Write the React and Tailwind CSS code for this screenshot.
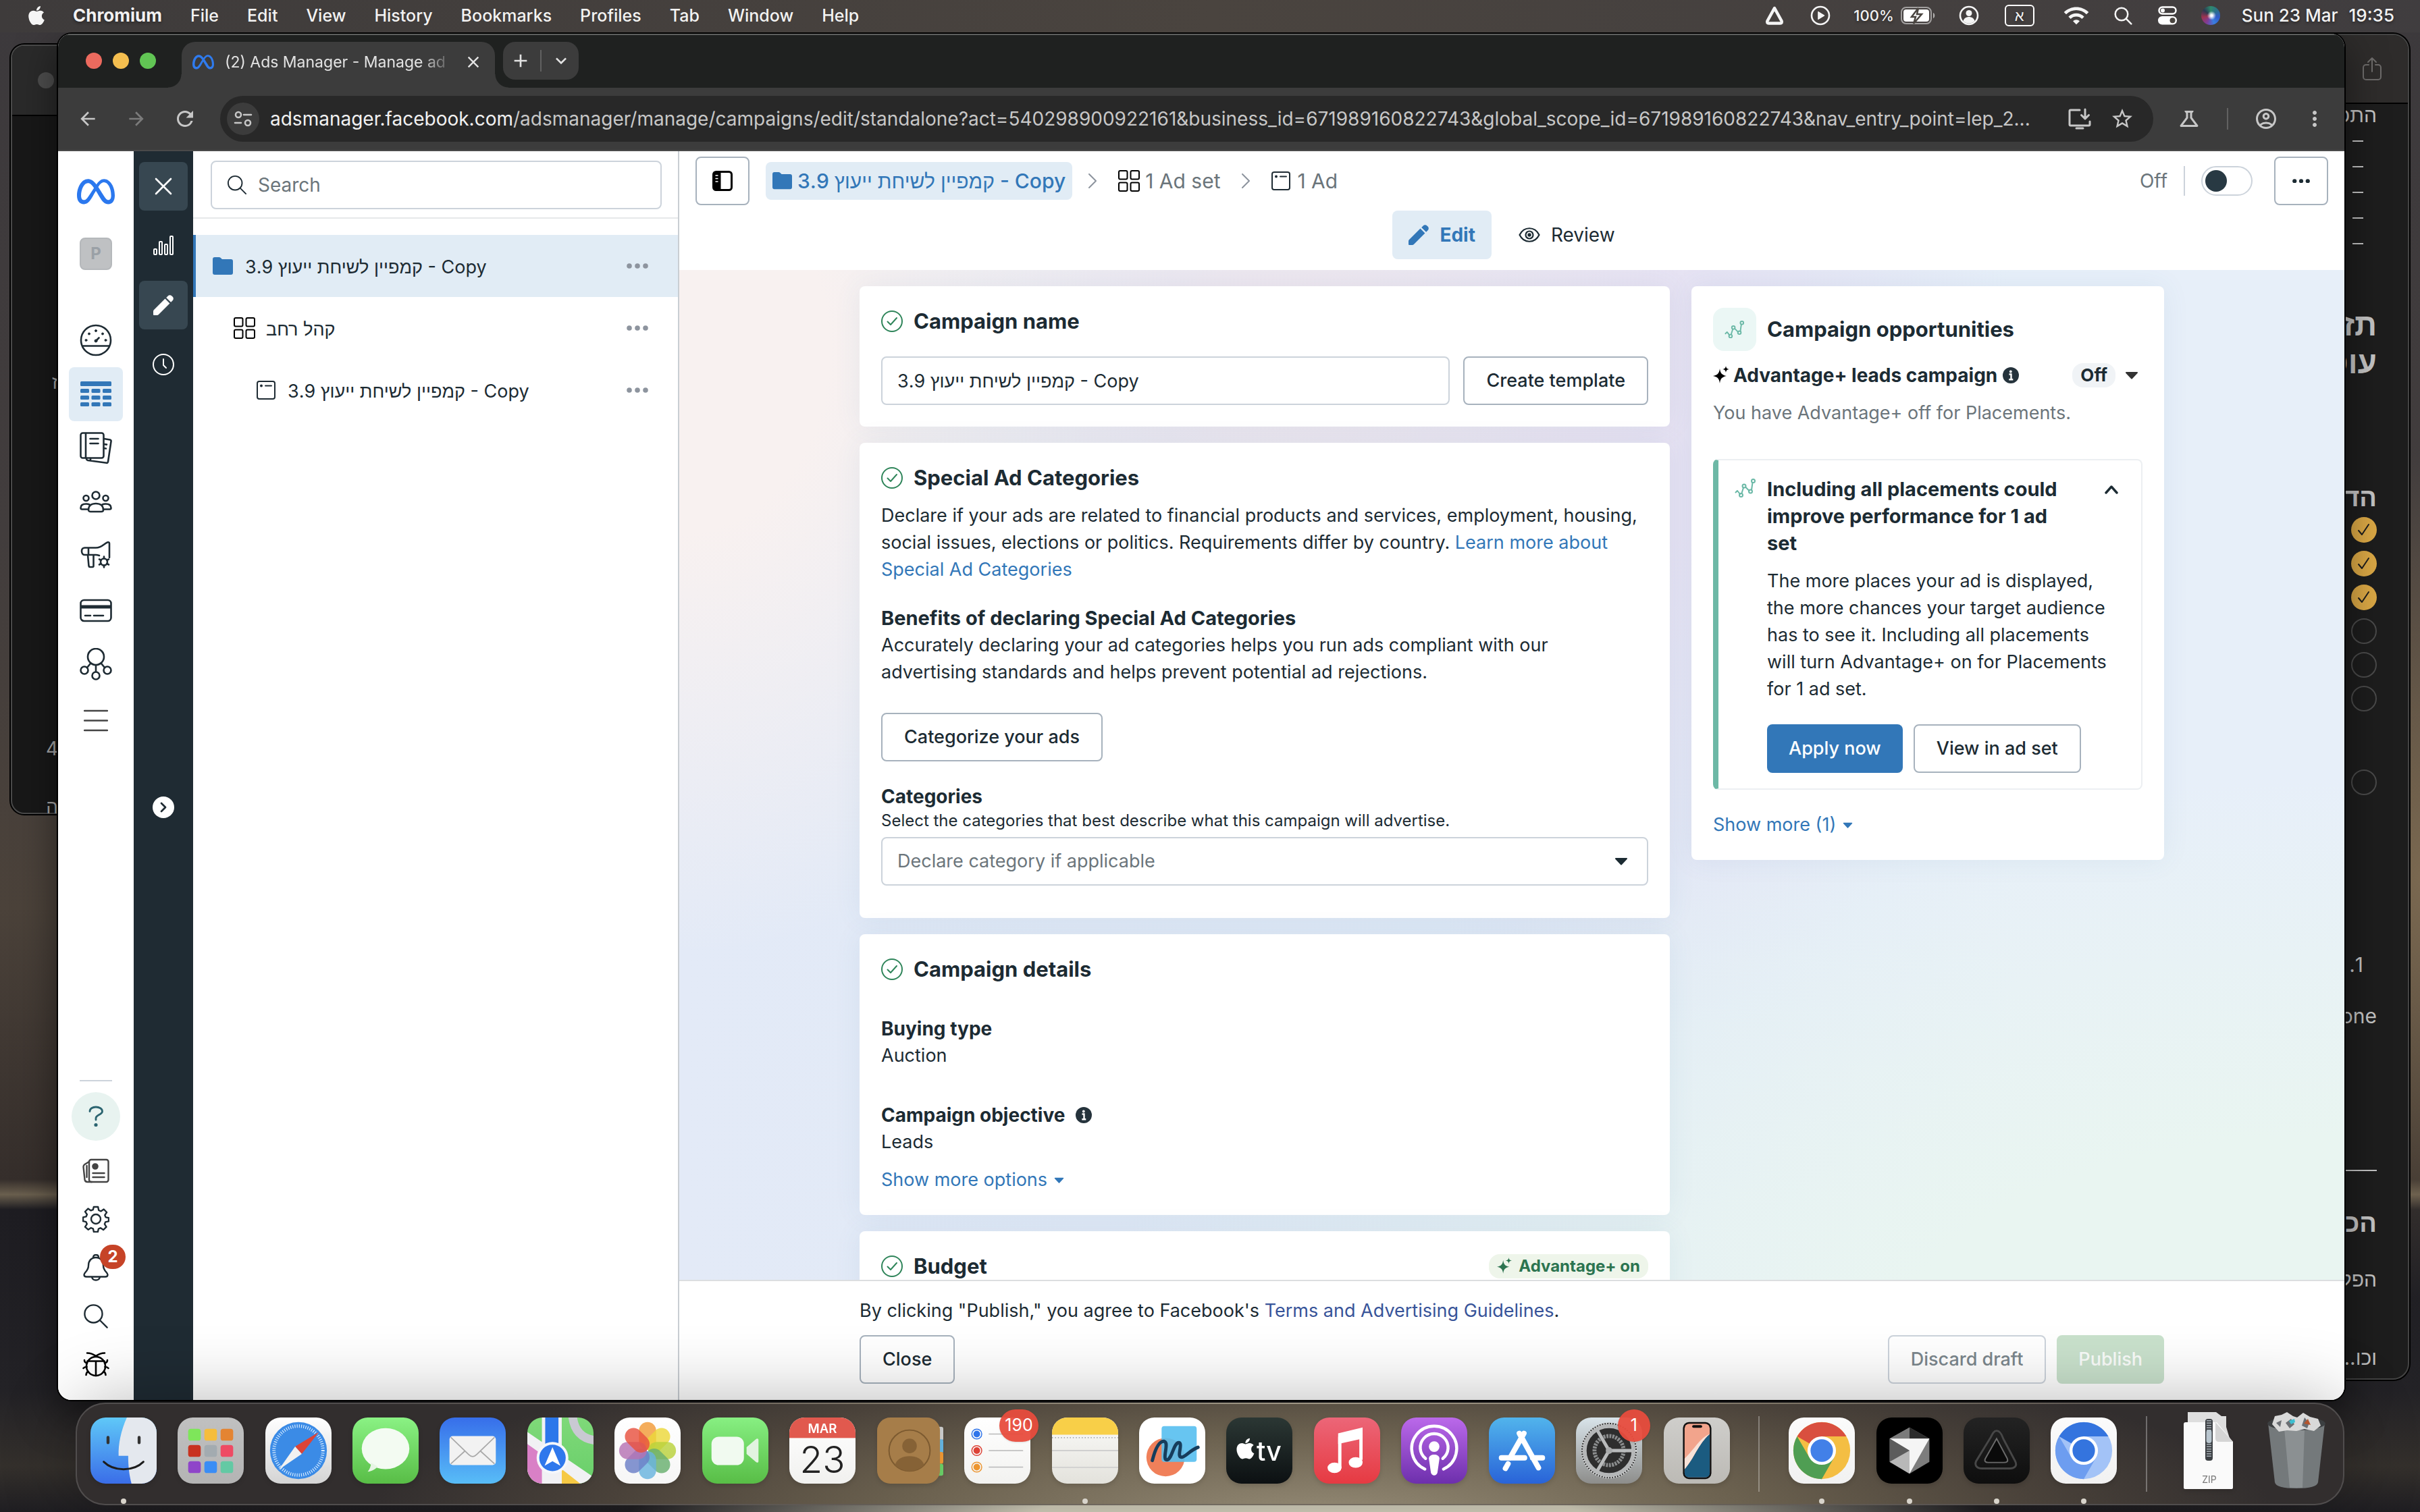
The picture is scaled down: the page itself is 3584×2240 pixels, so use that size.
import { FaApple, FaMeta } from "react-icons/fa6";
import {
  MdOutlineScience,
  MdOutlineAccountCircle,
  MdStarOutline,
  MdMoreVert,
  MdArrowBack,
  MdArrowForward,
  MdRefresh,
  MdClose,
  MdAdd,
  MdKeyboardArrowDown,
  MdWifi,
} from "react-icons/md";

const CAMPAIGN = "קמפיין לשיחת ייעוץ 3.9 - Copy";
const AD_SET = "קהל רחב";

/* ---------- generic icons ---------- */

function Icon({ className = "", box = "0 0 24 24", sw = 1.5, children }) {
  return (
    <svg
      viewBox={box}
      className={`shrink-0 ${className}`}
      fill="none"
      stroke="currentColor"
      strokeWidth={sw}
      strokeLinecap="round"
      strokeLinejoin="round"
      aria-hidden="true"
    >
      {children}
    </svg>
  );
}

const FolderIcon = ({ className }) => (
  <Icon className={className} box="0 0 30 27" sw={0}>
    <path fill="currentColor" d="M0 3a3 3 0 0 1 3-3h6.500a3 3 0 0 1 2 .8L14 3h13a3 3 0 0 1 3 3v17a3 3 0 0 1-3 3H3a3 3 0 0 1-3-3Z" />
  </Icon>
);
const GridIcon = ({ className }) => (
  <Icon className={className} box="0 0 32 32" sw={2}>
    <rect x="1" y="1" width="12.500" height="12.500" rx="2" />
    <rect x="18.500" y="1" width="12.500" height="12.500" rx="2" />
    <rect x="1" y="18.500" width="12.500" height="12.500" rx="2" />
    <rect x="18.500" y="18.500" width="12.500" height="12.500" rx="2" />
  </Icon>
);
const AdIcon = ({ className }) => (
  <Icon className={className} box="0 0 28 28" sw={2}>
    <rect x="1" y="1" width="26" height="26" rx="3" />
    <path d="M13 7.500h9" />
    <circle cx="7" cy="7.500" r="1" fill="currentColor" />
  </Icon>
);
const SearchIcon = ({ className, sw = 2 }) => (
  <Icon className={className} box="0 0 32 32" sw={sw}>
    <circle cx="13" cy="13" r="11" />
    <path d="m21.500 21.500 8.500 8.500" />
  </Icon>
);
const PencilIcon = ({ className }) => (
  <Icon className={className} box="0 0 30 30" sw={0}>
    <path
      fill="currentColor"
      d="M0 24.500c0-1 .3-1.700 1-2.400L17.500 5.600l6.900 6.900L7.900 29c-.7.700-1.400 1-2.400 1H1a1 1 0 0 1-1-1ZM19.200 3.900 21.700 1.400a4 4 0 0 1 5.700 0l1.200 1.200a4 4 0 0 1 0 5.700l-2.500 2.500Z"
    />
  </Icon>
);
const CheckCircle = () => (
  <Icon className="size-8 text-[#2f855a]" box="0 0 32 32" sw={2}>
    <circle cx="16" cy="16" r="15" />
    <path d="m9.500 16.500 4.500 4.500 9-10" />
  </Icon>
);
const CaretDown = ({ className }) => (
  <Icon className={className} box="0 0 20 12" sw={2}>
    <path fill="currentColor" d="M2 2h16l-8 8.500Z" />
  </Icon>
);
const InfoIcon = ({ className }) => (
  <svg viewBox="0 0 24 24" className={`shrink-0 ${className}`} aria-hidden="true">
    <circle cx="12" cy="12" r="12" fill="#25333c" />
    <circle cx="11.800" cy="6.500" r="1.900" fill="#fff" />
    <path d="M9.500 10.500h3V18M9.300 18.300h6" stroke="#fff" strokeWidth="2.400" fill="none" />
  </svg>
);
const SparkleIcon = ({ className }) => (
  <svg viewBox="0 0 24 28" className={`shrink-0 ${className}`} fill="currentColor" aria-hidden="true">
    <path d="M10 4c.8 6.500 2.800 9.600 10 11-7.200 1.400-9.200 4.500-10 11-.8-6.500-2.800-9.600-10-11 7.200-1.400 9.200-4.500 10-11ZM19 0c.4 3.200 1.600 4.500 5 5-3.400.5-4.600 1.800-5 5-.4-3.200-1.600-4.500-5-5 3.400-.5 4.600-1.800 5-5Z" />
  </svg>
);
const TrendIcon = ({ className }) => (
  <Icon className={className} box="0 0 32 28" sw={2}>
    <path d="M1.500 20.500 4 18l4 5M10.500 21.500l2.500-8M16.500 13l5 5M25 17l1.500-11" />
    <circle cx="9.500" cy="24.500" r="2.500" />
    <circle cx="14" cy="11" r="2.500" />
    <circle cx="23.500" cy="19" r="2.500" />
    <circle cx="27.500" cy="3.500" r="2.500" />
  </Icon>
);
const ChevronRight = ({ className }) => (
  <Icon className={className} box="0 0 12 22" sw={2}>
    <path d="m1 1 10 10L1 21" />
  </Icon>
);
const Dots = ({ className }) => (
  <svg viewBox="0 0 32 8" className={`shrink-0 ${className}`} fill="currentColor" aria-hidden="true">
    <circle cx="4" cy="4" r="3.800" />
    <circle cx="16" cy="4" r="3.800" />
    <circle cx="28" cy="4" r="3.800" />
  </svg>
);

/* ---------- rail icons ---------- */

const GaugeIcon = () => (
  <Icon className="size-12" box="0 0 48 48" sw={2.6}>
    <circle cx="24" cy="24" r="22" />
    <path d="M4.500 32.500h39M24 25l4.500-4.500" />
    <g fill="currentColor" strokeWidth="1">
      <circle cx="24" cy="10" r="1.500" />
      <circle cx="14" cy="14.500" r="1.500" />
      <circle cx="34" cy="14.500" r="1.500" />
      <circle cx="9.500" cy="24" r="1.500" />
      <circle cx="38.500" cy="24" r="1.500" />
      <circle cx="24" cy="25" r="2" />
    </g>
  </Icon>
);
const TableIcon = () => (
  <svg viewBox="0 0 46 38" className="w-[46px]" fill="currentColor" aria-hidden="true">
    <rect width="46" height="7" rx="1.500" />
    {[11, 21, 31].map((y) =>
      [0, 16.5, 33].map((x) => <rect key={`${x}-${y}`} x={x} y={y} width="13" height="6" rx="1.500" />)
    )}
  </svg>
);
const PagesIcon = () => (
  <Icon className="size-12" box="0 0 48 48" sw={2.6}>
    <rect x="1.500" y="1.500" width="34" height="37" rx="3" />
    <path d="M9 2v36M15.500 10h12M15.500 17h12M36 10l9 1.500a2 2 0 0 1 1.500 2.500L42 44a2 2 0 0 1-2.300 1.800L12 42a3 3 0 0 1-2-3M16 39v3M36 18l4 .6M36 24l3 .5" />
  </Icon>
);
const PeopleIcon = () => (
  <Icon className="size-12" box="0 0 48 48" sw={2.6}>
    <circle cx="24" cy="14" r="5.500" />
    <circle cx="9.500" cy="18" r="4" />
    <circle cx="38.500" cy="18" r="4" />
    <path d="M13 35.500c0-6 4-9.500 11-9.500s11 3.500 11 9.500c0 2-2 2.500-3 2.500H16c-1 0-3-.5-3-2.500ZM12 34.500H3.500c-1.500 0-2-1-2-2 0-4 3-6 8-6 2 0 4 .5 5 1M36 34.500h8.500c1.500 0 2-1 2-2 0-4-3-6-8-6-2 0-4 .5-5 1" />
  </Icon>
);
const MegaphoneIcon = () => (
  <Icon className="size-12" box="0 0 48 48" sw={2.6}>
    <path d="M44 26V5c0-1.500-1.500-2-3-1.500-5 2-8 8-17 8H7.500c-2.500 0-4.500 1.500-4.500 5s2 5.500 4.500 5.500H24c2 0 3.500.5 5 1M13 12v10M12 22l1.500 16.500c.2 1 .8 1.500 1.500 1.500h4c1 0 1.500-.7 1.500-1.500V22" />
    <circle cx="36" cy="32.500" r="5" />
    <path d="M36 24.500v3M36 37.500v3M43 28.500l-2.600 1.500M31.600 35 29 36.500M43 36.500 40.400 35M31.600 30 29 28.500" />
  </Icon>
);
const CardIcon = () => (
  <Icon className="size-12" box="0 0 48 48" sw={2.6}>
    <rect x="1.500" y="9" width="45" height="31" rx="5" />
    <path d="M2 19h44" strokeWidth="5" strokeLinecap="butt" />
    <path d="M8 32h8M21 32h14" />
  </Icon>
);
const OrgIcon = () => (
  <Icon className="size-12" box="0 0 48 48" sw={2.6}>
    <circle cx="24" cy="13" r="12" />
    <circle cx="7" cy="33" r="5.500" />
    <circle cx="41" cy="33" r="5.500" />
    <circle cx="24" cy="41" r="5.500" />
    <path d="m11 29 5-6M37 29l-5-6M24 25.500V35" />
  </Icon>
);
const NewsIcon = () => (
  <Icon className="size-10 text-[#444]" box="0 0 40 40" sw={2.4}>
    <rect x="10" y="4" width="28.500" height="33" rx="3" />
    <path d="M10 7 3.500 11c-1.500 1-2 2-2 3.500l2 19c.3 2 2 3.500 4 3.500H14M6.500 13v17" />
    <circle cx="19" cy="14" r="3.600" fill="currentColor" />
    <path d="M15.500 24h17M15.500 30h17" />
  </Icon>
);
const GearIcon = () => (
  <Icon className="size-10" box="0 0 40 40" sw={2.4}>
    <path d="M16.800 2h6.400l1 5 3.200 1.400L31.700 5.500l4.400 4.500-2.800 4.200 1.300 3.200 4.400.9v5l-4.800 1-1.300 3.100 2.600 4.200-4.300 4.400-4.200-2.800-3.100 1.300-1 4.500h-6l-1-4.700-3.100-1.300-4.200 2.700L4 31.600l2.800-4.300-1.400-3.100L1 23.200v-5.800l4.500-1 1.400-3.200L4 9l4.400-4.400 4.300 2.800 3.100-1.300Z" />
    <circle cx="20" cy="20" r="7" />
  </Icon>
);
const BellIcon = () => (
  <Icon className="size-10" box="0 0 40 40" sw={2.4}>
    <path d="M20 5c7 0 11 5 11 12 0 8 6.500 10 6.500 13.500 0 2-1.500 3-3.500 3H6c-2 0-3.500-1-3.500-3C2.500 27 9 25 9 17 9 10 13 5 20 5ZM16 5c0-2.300 1.500-4 4-4s4 1.700 4 4M14 34c.8 3 3 4.500 6 4.500s5.200-1.500 6-4.500" />
  </Icon>
);
const BugIcon = () => (
  <Icon className="size-10 text-black" box="0 0 40 40" sw={2.6}>
    <circle cx="20" cy="22" r="14" />
    <path d="M7.500 14.500h25M20 15v21M7 2.500c6 0 9 1.500 13 4.500 4-3 7-4.500 13-4.500M3 13c0 3 1.500 4 4 4.500M37 13c0 3-1.500 4-4 4.500M1.500 25c1.500-2 2.500-2 5-2M38.500 25c-1.500-2-2.500-2-5-2M5.500 35c0-3 1-4 3-5M34.500 35c0-3-1-4-3-5" />
  </Icon>
);

/* ---------- dock app icons ---------- */

function AppTile({ id, from, to, children }) {
  return (
    <svg viewBox="0 0 100 100" className="size-[98px] drop-shadow-md" aria-hidden="true">
      <defs>
        <linearGradient id={`${id}-bg`} x1="0" y1="0" x2="0" y2="1">
          <stop offset="0" stopColor={from} />
          <stop offset="1" stopColor={to} />
        </linearGradient>
        <clipPath id={`${id}-clip`}>
          <rect width="100" height="100" rx="23" />
        </clipPath>
      </defs>
      <g clipPath={`url(#${id}-clip)`}>
        <rect width="100" height="100" fill={`url(#${id}-bg)`} />
        {children}
      </g>
    </svg>
  );
}

const FinderApp = () => (
  <AppTile id="finder" from="#5fc8f8" to="#3a6de8">
    <path d="M55 0C46 20 42 40 42.500 58H57c0 16 1.500 29 5 42h38V0Z" fill="#e4e8ee" />
    <path d="M26.500 30v8M73.500 30v8" stroke="#333" strokeWidth="4.500" strokeLinecap="round" />
    <path d="M20 67c15 15 45 15 60 0" stroke="#1c1c1c" strokeWidth="3" fill="none" strokeLinecap="round" />
  </AppTile>
);
const LaunchpadApp = () => {
  const colors = ["#7ee65a", "#f5bd3c", "#e48432", "#c8321f", "#a3abb0", "#ee4b64", "#8f45c9", "#3a8df5", "#63c9a4"];
  return (
    <AppTile id="launchpad" from="#c0c0c0" to="#b4b4b4">
      {colors.map((c, i) => (
        <rect key={c} x={16 + (i % 3) * 24.5} y={17 + Math.floor(i / 3) * 24.5} width="19" height="18" rx="4" fill={c} />
      ))}
    </AppTile>
  );
};
const SafariApp = () => (
  <AppTile id="safari" from="#ffffff" to="#d4d4d4">
    <circle cx="50" cy="50" r="43" fill="#3b8be6" />
    <circle cx="50" cy="50" r="37" fill="none" stroke="#d6ebff" strokeWidth="5" strokeDasharray="1.200 2.100" />
    <path d="M81 22 45 44l10 11Z" fill="#dc4437" />
    <path d="M20 79 45 44l10 11Z" fill="#f1f1f1" />
  </AppTile>
);
const MessagesApp = () => (
  <AppTile id="messages" from="#8af284" to="#58bd46">
    <ellipse cx="50" cy="47" rx="36" ry="31" fill="#f3fbf2" />
    <path d="M28 68c0 6-2 10-5 14 7-1 12-4 15-8Z" fill="#e6f4e4" />
  </AppTile>
);
const MailApp = () => (
  <AppTile id="mail" from="#376eea" to="#58bdf7">
    <rect x="15" y="28" width="70" height="44" rx="5" fill="#f2f2f2" />
    <path d="m17 70 22-20M83 70 61 50M17 30l27 26c4 4 8 4 12 0l27-26" stroke="#a9a9a9" strokeWidth="1.800" fill="none" />
  </AppTile>
);
const MapsApp = () => (
  <AppTile id="maps" from="#7fd979" to="#69cf6a">
    <path d="M0 22 100 90v10H0Z" fill="#f1f1f4" />
    <path d="M0 40 28 60v40H0Z" fill="#d980c6" />
    <path d="M52 78 80 100H52Z" fill="#f6c944" />
    <path d="M68-5c2 25 14 38 38 40" stroke="#c9c9d2" strokeWidth="13" fill="none" />
    <rect x="22" width="30" height="100" fill="#f1f1f4" />
    <rect x="27" width="20" height="60" fill="#2b77ea" />
    <circle cx="38" cy="61" r="24" fill="#f5f7fb" />
    <circle cx="38" cy="61" r="20" fill="#2f78ec" />
    <path d="m38 45 12 28-12-7-12 7Z" fill="#fff" />
  </AppTile>
);
const PhotosApp = () => {
  const petals = ["#f29b38", "#ecd83a", "#b9d23c", "#69b06f", "#69b3de", "#6b7fc7", "#b673b3", "#e8523f"];
  return (
    <AppTile id="photos" from="#ffffff" to="#f6f6f6">
      {petals.map((c, i) => (
        <rect key={c} x="37" y="7" width="26" height="42" rx="13" fill={c} opacity="0.82" transform={`rotate(${i * 45} 50 50)`} />
      ))}
    </AppTile>
  );
};
const FaceTimeApp = () => (
  <AppTile id="facetime" from="#87ef82" to="#58bd46">
    <rect x="14" y="29" width="49" height="43" rx="11" fill="#f1faf0" />
    <path d="m67 45 14-12c2-2 4-1 4 1v32c0 2-2 3-4 1L67 55Z" fill="#e2f3e0" />
  </AppTile>
);
const CalendarApp = () => (
  <AppTile id="calendar" from="#ffffff" to="#f1f1ef">
    <rect width="100" height="31" fill="#e1594e" />
    <text x="50" y="23" textAnchor="middle" fontSize="19" fontWeight="600" fill="#fff">MAR</text>
    <text x="50" y="84" textAnchor="middle" fontSize="56" fontWeight="300" fill="#222">23</text>
  </AppTile>
);
const ContactsApp = () => (
  <svg viewBox="0 0 100 100" className="size-[98px] drop-shadow-md" aria-hidden="true">
    <rect x="80" y="14" width="20" height="21" rx="3" fill="#c8c8c8" />
    <rect x="80" y="33" width="20" height="21" rx="3" fill="#62b1dd" />
    <rect x="80" y="52" width="20" height="18" rx="3" fill="#e99432" />
    <rect x="80" y="70" width="20" height="18" rx="3" fill="#67c964" />
    <rect width="95" height="100" rx="20" fill="#a67d49" />
    <circle cx="49" cy="50" r="31" fill="none" stroke="#7c5a30" strokeWidth="2" />
    <circle cx="49" cy="43" r="11" fill="#866236" />
    <path d="M27 72c4-18 40-18 44 0-12 12-32 12-44 0Z" fill="#866236" />
  </svg>
);
const RemindersApp = () => (
  <AppTile id="reminders" from="#ffffff" to="#f2f2f0">
    {["#2f74ea", "#dd4236", "#ec9530"].map((c, i) => (
      <g key={c}>
        <circle cx="19" cy={25 + i * 25} r="7.500" fill="none" stroke={c} strokeWidth="1.500" />
        <circle cx="19" cy={25 + i * 25} r="5" fill={c} />
        <path d={`M37 ${25 + i * 25}h52`} stroke="#b9b9b9" strokeWidth="1.500" />
      </g>
    ))}
  </AppTile>
);
const NotesApp = () => (
  <AppTile id="notes" from="#fbfbf9" to="#e3e2dc">
    <rect width="100" height="26" fill="#f8cf48" />
    <path d="M0 30.500h100" stroke="#a9a9a9" strokeWidth="2" strokeDasharray="1.500 3" />
    <path d="M0 50h100M0 75.500h100" stroke="#cfcfcf" strokeWidth="1.800" />
  </AppTile>
);
const FreeformApp = () => (
  <AppTile id="freeform" from="#ffffff" to="#ffffff">
    <circle cx="40" cy="60" r="29" fill="#f0805a" />
    <rect x="34" y="13" width="53" height="54" rx="4" fill="#56bff0" opacity="0.9" />
    <path d="M20 65c4-16 10-30 18-29 8 2-4 28 4 28 8-1 10-26 18-26 7 1-4 22 4 22 6 0 12-10 25-15" stroke="#173d5c" strokeWidth="5" fill="none" strokeLinecap="round" />
  </AppTile>
);
const TvApp = () => (
  <AppTile id="tv" from="#2b3734" to="#0c1012">
    <FaApple x="11" y="29" size={36} color="#fff" />
    <text x="46" y="65" fontSize="40" fontWeight="500" fill="#fff">tv</text>
  </AppTile>
);
const MusicApp = () => (
  <AppTile id="music" from="#ec6678" to="#e63a42">
    <path d="M39 29v48M71 22v42" stroke="#fff" strokeWidth="5" />
    <path d="M36.500 24 73.500 15v17l-37 8Z" fill="#fff" />
    <ellipse cx="31" cy="76" rx="10.500" ry="8" fill="#fff" />
    <ellipse cx="63" cy="68" rx="10.500" ry="8" fill="#fff" />
  </AppTile>
);
const PodcastsApp = () => (
  <AppTile id="podcasts" from="#bb69ea" to="#6d2fac">
    <path d="M36 78a34 34 0 1 1 28 0M37 62a21 21 0 1 1 26 0" stroke="#fff" strokeWidth="4.500" fill="none" strokeLinecap="round" />
    <circle cx="50" cy="44" r="8" fill="#fff" />
    <path d="M42 62c0-8 16-8 16 0l-3 21c-1 6-9 6-10 0Z" fill="#fff" />
  </AppTile>
);
const AppStoreApp = () => (
  <AppTile id="appstore" from="#51b4ec" to="#2963d8">
    <path d="M53 24 32 61M46 24l29 52M19 61h35M66 61h15M29 70l-4 7" stroke="#fff" strokeWidth="8" strokeLinecap="round" fill="none" />
  </AppTile>
);
const SettingsApp = () => (
  <AppTile id="settings" from="#d9e4ea" to="#8d8d8b">
    <circle cx="50" cy="50" r="42" fill="#2e2e2e" />
    <circle cx="50" cy="50" r="37" fill="none" stroke="#b5b7b8" strokeWidth="6" />
    <circle cx="50" cy="50" r="41" fill="none" stroke="#d0d2d3" strokeWidth="3" strokeDasharray="2 2" />
    <circle cx="50" cy="50" r="22" fill="none" stroke="#8b8d8e" strokeWidth="6" strokeDasharray="3 1.500" />
    <path d="M50 50h36M50 50 32 19M50 50 32 81" stroke="#b9bbbc" strokeWidth="5" />
    <circle cx="50" cy="50" r="5" fill="#a9abac" />
  </AppTile>
);
const PhoneMirrorApp = () => (
  <AppTile id="mirror" from="#cfcecb" to="#bcbab5">
    <rect x="29" y="7" width="43" height="86" rx="9" fill="#101010" />
    <rect x="31.500" y="9.500" width="38" height="81" rx="7" fill="#f2a48c" />
    <path d="M69.500 25C52 40 46 62 31.500 78v6c0 4 3 6.500 7 6.500h24c4 0 7-2.500 7-6.500Z" fill="#1b5b80" />
    <path d="M69.500 25C52 40 46 62 31.500 78V62C45 50 55 30 69.500 25Z" fill="#f7e2d8" />
    <rect x="43" y="11.500" width="15" height="4" rx="2" fill="#101010" />
  </AppTile>
);
function ChromeLogo({ id, top, right, left, center }) {
  return (
    <AppTile id={id} from="#fbfbfb" to="#f1f1f1">
      <circle cx="50" cy="50" r="43" fill={right} />
      <path d="M50 50 12.800 28.500A43 43 0 0 1 87.200 28.500H50Z" fill={top} />
      <path d="M12.800 28.500A43 43 0 0 0 50 93L68.600 60.700 50 50 31.400 60.700Z" fill={left} />
      <circle cx="50" cy="50" r="21.500" fill="#fff" />
      <circle cx="50" cy="50" r="17" fill={center} />
    </AppTile>
  );
}
const ChromeApp = () => <ChromeLogo id="chrome" top="#d94f3f" right="#f4be43" left="#4f9e53" center="#4280e8" />;
const ChromiumApp = () => <ChromeLogo id="chromium" top="#3474de" right="#a3c3f7" left="#6d9df0" center="#3474de" />;
const CursorApp = () => (
  <AppTile id="cursor" from="#000000" to="#000000">
    <path d="m50 15 30 17v35L50 85 20 67V32Z" fill="#7d7d7d" />
    <path d="M50 15 20 32h30Z" fill="#7a7a7a" />
    <path d="M50 15v17h30Z" fill="#2c2c2c" />
    <path d="M20 32h60L50 85V50Z" fill="#f5f5f5" />
    <path d="M20 32v35l30-17Z" fill="#5c5c5c" />
    <path d="M20 67 50 50v35Z" fill="#b8b8b8" />
  </AppTile>
);
const TriangleApp = () => (
  <AppTile id="tri" from="#232323" to="#0e0e0e">
    <path d="M50 20c5 0 8 6 10 12l18 34c4 8-2 11-8 11H28c-7 0-12-4-9-11l22-36c3-6 5-10 9-10Z" fill="none" stroke="#474747" strokeWidth="3" />
    <path d="M50 32 66 62c2 5-1 6-5 6H37c-4 0-6-2-4-6Z" fill="#0a0a0a" stroke="#6a6a6a" strokeWidth="2" />
  </AppTile>
);
const ZipFile = () => (
  <svg viewBox="0 0 76 114" className="h-[114px] w-[76px] drop-shadow-md" aria-hidden="true">
    <path d="M6 0h42l8 6h7v16l6 20H6Z" fill="#dedede" />
    <path d="M3 15h46l24 29v68a2 2 0 0 1-2 2H2a2 2 0 0 1-2-2V18a3 3 0 0 1 3-3Z" fill="#fafafa" />
    <path d="m47 15 26 29H52c-3 0-5-2-5-5Z" fill="#d5d5d5" />
    <rect x="32" y="10" width="11" height="62" rx="4" fill="#3c4044" />
    <path d="M37.500 12v56" stroke="#a6aeb4" strokeWidth="7" strokeDasharray="1.500 2" />
    <rect x="33.500" y="26" width="8" height="20" rx="4" fill="#b9c6cf" />
    <text x="38" y="105" textAnchor="middle" fontSize="14" fill="#777">ZIP</text>
  </svg>
);
const TrashCan = () => (
  <svg viewBox="0 0 88 114" className="h-[114px] w-[88px]" aria-hidden="true">
    <path d="M2 16h84l-10 88c-1 6-12 9-32 9s-31-3-32-9Z" fill="#74797b" />
    <path d="M26 24h30l-3 88H34Z" fill="#8b9092" />
    <ellipse cx="44" cy="17" rx="43" ry="10" fill="#3c3f41" />
    <path d="m8 18 4-12 10-2 8-4 9 6 6 2 9-7 10 6 12 3 4 10-10 8-14-3-12 3-14-1-12 2Z" fill="#d9d9d9" />
    <path d="m28 16 8-6 5 8-7 6ZM52 20l4-12 7 8-3 8ZM14 16l8-4-2 10Z" fill="#6b6f74" />
    <path d="m33 13 8-3 1 5-6 3Z" fill="#3dbfd0" />
    <path d="m55 17 6-7 4 9Z" fill="#b5552d" />
  </svg>
);

const DOCK_MAIN = [
  { name: "Finder", Art: FinderApp, running: true },
  { name: "Launchpad", Art: LaunchpadApp },
  { name: "Safari", Art: SafariApp },
  { name: "Messages", Art: MessagesApp },
  { name: "Mail", Art: MailApp },
  { name: "Maps", Art: MapsApp },
  { name: "Photos", Art: PhotosApp },
  { name: "FaceTime", Art: FaceTimeApp },
  { name: "Calendar", Art: CalendarApp },
  { name: "Contacts", Art: ContactsApp },
  { name: "Reminders", Art: RemindersApp, badge: "190" },
  { name: "Notes", Art: NotesApp, running: true },
  { name: "Freeform", Art: FreeformApp },
  { name: "TV", Art: TvApp },
  { name: "Music", Art: MusicApp },
  { name: "Podcasts", Art: PodcastsApp },
  { name: "App Store", Art: AppStoreApp },
  { name: "System Settings", Art: SettingsApp, badge: "1" },
  { name: "iPhone Mirroring", Art: PhoneMirrorApp },
];
const DOCK_RECENT = [
  { name: "Chrome", Art: ChromeApp, running: true },
  { name: "Cursor", Art: CursorApp, running: true },
  { name: "Triangle", Art: TriangleApp, running: true },
  { name: "Chromium", Art: ChromiumApp, running: true },
];
const DOCK_FILES = [
  { name: "Archive", Art: ZipFile },
  { name: "Trash", Art: TrashCan },
];

function DockItem({ name, Art, running, badge }) {
  return (
    <button type="button" aria-label={name} className="relative flex h-[150px] flex-1 flex-col items-center justify-between">
      <span className="flex h-[142px] items-center justify-center">
        <Art />
      </span>
      <span className={running ? "size-2 rounded-full bg-[#d8d4cb]" : "size-2"} />
      {badge && (
        <span className="absolute top-2.5 right-1 flex h-12 min-w-12 items-center justify-center rounded-full bg-[#e84c3d]/95 px-2 text-[25px] text-white shadow">
          {badge}
        </span>
      )}
    </button>
  );
}

function Dock() {
  const separator = <span className="h-28 w-0.5 shrink-0 self-center bg-white/30" />;
  return (
    <nav
      aria-label="Dock"
      className="absolute inset-x-28 bottom-2.5 flex h-[152px] rounded-[44px] border-2 border-white/15 bg-[radial-gradient(ellipse_42%_190%_at_55%_115%,#958b76_0%,#6b614f_45%,#4a423a_75%,#322e2e_100%)] pr-1 shadow-[0_0_110px_rgba(0,0,0,0.3)]"
    >
      <div className="-mt-0.5 flex grow-[19] basis-0 pl-1">{DOCK_MAIN.map((a) => <DockItem key={a.name} {...a} />)}</div>
      <div className="flex w-14 justify-center">{separator}</div>
      <div className="-mt-0.5 flex grow-[4] basis-0">{DOCK_RECENT.map((a) => <DockItem key={a.name} {...a} />)}</div>
      <div className="flex w-14 justify-center">{separator}</div>
      <div className="-mt-0.5 flex grow-[2] basis-0">{DOCK_FILES.map((a) => <DockItem key={a.name} {...a} />)}</div>
    </nav>
  );
}

/* ---------- desktop ---------- */

function MenuBar() {
  return (
    <header className="absolute inset-x-0 top-0 flex h-12 items-center justify-between bg-gradient-to-r from-[#3e3b3b] via-[#4a443f] to-[#403d3f] pr-[38px] pl-[38px] text-[25px] leading-none font-medium text-white/95 [text-shadow:0_2px_4px_rgba(0,0,0,0.4)]">
      <nav aria-label="Menu bar" className="flex h-full items-center gap-[42px] pb-0.5">
        <FaApple className="size-8" />
        <span className="-ml-1 text-[26px] font-bold">Chromium</span>
        {["File", "Edit", "View", "History", "Bookmarks", "Profiles", "Tab", "Window", "Help"].map((m) => (
          <button type="button" key={m}>{m}</button>
        ))}
      </nav>
      <div className="flex h-full items-center pb-0.5">
        <Icon className="mr-[38px] size-[30px]" box="0 0 30 30" sw={4.5}>
          <path d="M15 4 4.500 23c-1 2 0 3.500 2 3.500h17c2 0 3-1.500 2-3.500Z" />
        </Icon>
        <Icon className="mr-[34px] size-[30px]" box="0 0 30 30" sw={2.6}>
          <circle cx="15" cy="15" r="13" />
          <path d="m12 9.500 9 5.500-9 5.500Z" fill="currentColor" strokeWidth="1" />
        </Icon>
        <span className="mr-2.5 text-[22px]">100%</span>
        <svg viewBox="0 0 52 26" className="mr-[34px] h-[26px] w-[52px]" aria-hidden="true">
          <rect x="1" y="1" width="44" height="24" rx="7" fill="none" stroke="#fff" strokeOpacity=".5" strokeWidth="2" />
          <rect x="4" y="4" width="38" height="18" rx="4" fill="#fff" />
          <path d="M48 9v8c3-1 3-7 0-8Z" fill="#fff" fillOpacity=".6" />
          <path d="m26 2-10 13h6l-3 10 12-14h-7Z" fill="#fff" stroke="#4a4540" strokeWidth="2.500" />
        </svg>
        <Icon className="mr-[38px] size-[30px]" box="0 0 30 30" sw={2.6}>
          <circle cx="15" cy="15" r="13" />
          <circle cx="15" cy="11.500" r="4.500" fill="currentColor" strokeWidth="0" />
          <path d="M6.500 23c2-8 15-8 17 0-5 5-12 5-17 0Z" fill="currentColor" strokeWidth="0" />
        </Icon>
        <span className="mr-[42px] flex h-8 w-11 items-center justify-center rounded-md border-2 border-white text-[22px]">א</span>
        <MdWifi className="mr-9 size-10" />
        <SearchIcon className="mr-[38px] size-[27px]" sw={3} />
        <svg viewBox="0 0 28 28" className="mr-9 size-7" aria-hidden="true">
          <rect x="1.500" y="1.500" width="25" height="10" rx="5" fill="none" stroke="#fff" strokeWidth="2.500" />
          <circle cx="7" cy="6.500" r="3" fill="#fff" />
          <rect y="15" width="28" height="12.500" rx="6.200" fill="#fff" />
          <circle cx="21.500" cy="21.200" r="4" fill="#4a4540" />
        </svg>
        <span className="mr-8 size-7 rounded-full bg-[radial-gradient(circle_at_55%_50%,#ffffff_6%,transparent_32%),conic-gradient(from_0deg,#2f8a6c,#2b6f8c,#2f58c8,#3a7fe0,#7c3f9c,#9c3350,#2b3850,#2f8a6c)]" />
        <span className="mr-4 text-[26px]">Sun 23 Mar</span>
        <span className="text-[26px]">19:35</span>
      </div>
    </header>
  );
}

function EditorWindowBehind() {
  return (
    <section className="absolute top-[66px] left-4 h-[1140px] w-[1200px] rounded-[20px] border-2 border-[#4a4a4a] bg-[#181818] text-[28px] text-[#a8a8a8] shadow-[0_0_0_2px_#000]">
      <div className="flex h-[104px] items-center rounded-t-[18px] border-b-2 border-black bg-[#2a2a2a] pl-[38px]">
        <span className="size-6 rounded-full bg-[#4d4d4d]" />
      </div>
      <div className="flex w-[68px] flex-col items-end">
        <span className="mt-[374px] h-10 leading-10">ז</span>
        <span className="mt-[503px] h-10 leading-10">4</span>
        <span className="mt-[46px] h-10 leading-10">ה</span>
      </div>
    </section>
  );
}

function NoteCheck({ done }) {
  return done ? (
    <Icon className="size-[38px] text-[#1d1d1d]" box="0 0 38 38" sw={2}>
      <circle cx="19" cy="19" r="19" fill="#dba845" stroke="none" />
      <path d="m11 20 5 6 10-15" />
    </Icon>
  ) : (
    <span className="size-[38px] rounded-full border-2 border-[#4a4a4a]" />
  );
}

function NotesWindowBehind() {
  return (
    <section className="absolute top-[50px] right-4 bottom-[196px] w-[800px] rounded-[24px] border-2 border-[#444] bg-[#1d1d1d] text-[#c4c4c4] shadow-[0_0_0_2px_#000]">
      <div className="flex h-[102px] items-center justify-end rounded-t-[22px] border-b-2 border-black bg-[#2e2c2b] pr-9">
        <Icon className="h-9 w-8 text-[#6d6b6a]" box="0 0 32 36" sw={2}>
          <path d="M10 12H6a4 4 0 0 0-4 4v14a4 4 0 0 0 4 4h18a4 4 0 0 0 4-4V16a4 4 0 0 0-4-4h-4M15 22V2M9 8l6-6 6 6" />
        </Icon>
      </div>
      <div dir="rtl" className="flex flex-col items-start pr-[46px] text-[30px] leading-10">
        <span className="h-9 leading-8">התכ</span>
        {[0, 1, 2, 3, 4].map((i) => (
          <span key={i} className="flex h-[38px] items-center pr-5"><span className="h-0.5 w-4 bg-[#c4c4c4]" /></span>
        ))}
        <b className="mt-[72px] h-14 text-[46px] leading-[56px]">תז</b>
        <b className="h-14 text-[46px] leading-[56px]">עוס</b>
        <b className="mt-[148px] h-12 text-[38px] leading-[48px]">הדב</b>
        {[true, true, true, false, false, false].map((done, i) => (
          <span key={i} className="flex h-[50px] items-center"><NoteCheck done={done} /></span>
        ))}
        <span className="mt-[74px] flex h-[50px] items-center"><NoteCheck /></span>
        <span className="mt-[225px] pr-5">1.</span>
        <span className="mt-9">one</span>
        <span className="mt-[208px] h-0.5 w-32 bg-[#c4c4c4]" />
        <b className="mt-14 text-[38px]">הכנ</b>
        <span className="mt-11">הפל</span>
        <span className="mt-[76px]">וכו...</span>
      </div>
    </section>
  );
}

/* ---------- browser chrome ---------- */

function TabStrip() {
  return (
    <div className="flex h-20 items-end bg-[#1f2120] pl-[41px] shadow-[inset_0_2px_0_#5d5f5e]">
      <div className="mr-[38px] flex h-full items-center gap-4">
        <button type="button" aria-label="Close window" className="size-6 rounded-full bg-[#ec6a5e]" />
        <button type="button" aria-label="Minimize window" className="size-6 rounded-full bg-[#f4be4f]" />
        <button type="button" aria-label="Zoom window" className="size-6 rounded-full bg-[#61c554]" />
      </div>
      <div className="relative flex h-[68px] w-[464px] items-center rounded-t-[20px] bg-[#3c3c3c] pr-4 pb-2 pl-4">
        <span className="absolute bottom-0 -left-5 size-5 bg-[radial-gradient(circle_at_0_0,transparent_19px,#3c3c3c_20px)]" />
        <span className="absolute -right-5 bottom-0 size-5 bg-[radial-gradient(circle_at_100%_0,transparent_19px,#3c3c3c_20px)]" />
        <FaMeta className="mr-4 size-8 shrink-0 text-[#2f7bee]" />
        <span className="flex-1 text-[23px] leading-8 whitespace-nowrap text-[#e3e3e3] [mask-image:linear-gradient(to_right,#000_85%,transparent)]">
          (2) Ads Manager - Manage ad
        </span>
        <button type="button" aria-label="Close tab" className="ml-3 flex size-8 shrink-0 items-center justify-center text-[#e3e3e3]">
          <MdClose className="size-7" />
        </button>
      </div>
      <div className="mb-3 ml-3 flex h-14 w-28 items-center justify-between rounded-[18px] bg-[#3c3c3c] px-2.5 text-[#e3e3e3]">
        <button type="button" aria-label="New tab"><MdAdd className="size-8" /></button>
        <span className="h-8 w-0.5 bg-[#616161]" />
        <button type="button" aria-label="Search tabs"><MdKeyboardArrowDown className="size-8" /></button>
      </div>
    </div>
  );
}

function Toolbar() {
  return (
    <div className="flex h-[94px] items-center border-b-2 border-[#4a4a4a] bg-[#3c3c3c] pr-[26px] pl-2 text-[#c7c7c7]">
      <button type="button" aria-label="Back" className="flex w-[72px] justify-center"><MdArrowBack className="size-8" /></button>
      <button type="button" aria-label="Forward" className="flex w-[72px] justify-center text-[#7b7b7b]"><MdArrowForward className="size-8" /></button>
      <button type="button" aria-label="Reload" className="flex w-[72px] justify-center"><MdRefresh className="size-9" /></button>
      <div className="ml-4 flex h-[68px] min-w-0 flex-1 items-center rounded-full bg-[#282828] pr-7 pl-2.5">
        <span className="mr-4 flex size-12 shrink-0 items-center justify-center rounded-full bg-[#3c3c3c]">
          <Icon className="size-7" box="0 0 28 28" sw={2.6}>
            <circle cx="7" cy="8" r="4" />
            <path d="M15 8h11M2 20h9" />
            <circle cx="21" cy="20" r="4" />
          </Icon>
        </span>
        <p className="min-w-0 flex-1 truncate text-[28px] leading-9">
          <span className="text-[#f1f1f1]">adsmanager.facebook.com</span>
          /adsmanager/manage/campaigns/edit/standalone?act=540298900922161&amp;business_id=671989160822743&amp;global_scope_id=671989160822743&amp;nav_entry_point=lep_2...
        </p>
        <button type="button" aria-label="Install app" className="ml-5">
          <Icon className="size-[34px]" box="0 0 34 34" sw={3}>
            <path d="M17 4H3.500c-1 0-1.500.7-1.500 1.500v20c0 1 .5 1.500 1.500 1.500h27c1 0 1.500-.5 1.500-1.500V21M12 31h10M25 3v13M19.500 11.500 25 17l5.500-5.500" />
          </Icon>
        </button>
        <button type="button" aria-label="Bookmark this tab" className="ml-7"><MdStarOutline className="size-9" /></button>
      </div>
      <button type="button" aria-label="Labs" className="ml-[35px]"><MdOutlineScience className="size-9" /></button>
      <span className="mx-[38px] h-8 w-0.5 bg-[#616161]" />
      <button type="button" aria-label="Profile"><MdOutlineAccountCircle className="size-9" /></button>
      <button type="button" aria-label="Browser menu" className="ml-9"><MdMoreVert className="size-9" /></button>
    </div>
  );
}

/* ---------- Ads Manager page ---------- */

const RAIL = [
  { label: "Account overview", Art: GaugeIcon },
  { label: "Campaigns", Art: TableIcon, active: true },
  { label: "Ads reporting", Art: PagesIcon },
  { label: "Audiences", Art: PeopleIcon },
  { label: "Advertising settings", Art: MegaphoneIcon },
  { label: "Billing", Art: CardIcon },
  { label: "Events Manager", Art: OrgIcon },
];

function Rail() {
  const tool = "relative flex size-[72px] items-center justify-center";
  return (
    <nav aria-label="Business tools" className="flex w-28 shrink-0 flex-col items-center bg-white pb-4 text-[#1e2b33]">
      <span className="flex h-[120px] items-center"><FaMeta className="h-14 w-14 text-[#2b78ee]" /></span>
      <span className="flex h-16 items-center">
        <span className="flex size-12 items-center justify-center rounded-lg border-2 border-[#b5b8bb] bg-[#bfc1c3] text-2xl font-bold text-[#9aa0a6]">P</span>
      </span>
      <div className="mt-14 flex flex-col">
        {RAIL.map(({ label, Art, active }) => (
          <button
            type="button"
            key={label}
            aria-label={label}
            className={active ? "flex size-20 items-center justify-center rounded-lg bg-[#e1ecf5] text-[#3277b8]" : "flex size-20 items-center justify-center"}
          >
            <Art />
          </button>
        ))}
        <button type="button" aria-label="All tools" className="flex h-[88px] items-center justify-center">
          <Icon className="w-9 text-[#444]" box="0 0 36 34" sw={2.4}><path d="M1 2h34M1 16.500h34M1 31h34" /></Icon>
        </button>
      </div>
      <span className="mt-auto mb-4 h-0.5 w-12 bg-[#ccd3db]" />
      <button type="button" aria-label="Help" className="mb-2 flex size-[72px] items-center justify-center rounded-full bg-[#e8f3f0] text-[#2b6470]">
        <Icon className="h-8 w-6" box="0 0 24 32" sw={2.8}>
          <path d="M3 8.500C3 4.500 7 2 12 2s9.500 2.500 9.500 6.500c0 5-9.500 5-9.500 10V21" />
          <circle cx="12" cy="28.500" r="1.200" fill="currentColor" />
        </Icon>
      </button>
      <button type="button" aria-label="News" className={tool}><NewsIcon /></button>
      <button type="button" aria-label="Settings" className={tool}><GearIcon /></button>
      <button type="button" aria-label="Notifications" className={tool}>
        <BellIcon />
        <span className="absolute top-0.5 -right-2 flex h-9 w-[38px] items-center justify-center rounded-full bg-[#c64327] text-[24px] font-bold text-white">2</span>
      </button>
      <button type="button" aria-label="Search" className={tool}><SearchIcon className="size-[38px]" /></button>
      <button type="button" aria-label="Report a bug" className={tool}><BugIcon /></button>
    </nav>
  );
}

function DarkRail() {
  const item = "flex size-[72px] items-center justify-center rounded-lg text-white";
  return (
    <nav aria-label="Editor tools" className="flex w-[88px] shrink-0 flex-col items-center gap-4 bg-[#1f2b33] pt-4">
      <button type="button" aria-label="Close editor" className={`${item} bg-[#374751]`}>
        <Icon className="size-[26px]" box="0 0 26 26" sw={2.6}><path d="m2 2 22 22M24 2 2 24" /></Icon>
      </button>
      <button type="button" aria-label="Performance" className={item}>
        <Icon className="size-[30px]" box="0 0 30 30" sw={2}>
          <rect x="1" y="20" width="4" height="8" rx="1" />
          <rect x="9" y="9" width="4" height="19" rx="1" />
          <rect x="17" y="13" width="4" height="15" rx="1" />
          <rect x="25" y="1" width="4" height="27" rx="1" />
        </Icon>
      </button>
      <button type="button" aria-label="Edit" className={`${item} bg-[#374751]`}><PencilIcon className="size-[30px]" /></button>
      <button type="button" aria-label="History" className={item}>
        <Icon className="size-8" box="0 0 32 32" sw={2}><circle cx="16" cy="16" r="15" /><path d="M16 8v9l4 4" /></Icon>
      </button>
      <button type="button" aria-label="Expand" className="mt-[588px] flex size-8 items-center justify-center rounded-full bg-white text-[#1f2b33]">
        <Icon className="size-4" box="0 0 16 16" sw={2.8}><path d="m5 2 6 6-6 6" /></Icon>
      </button>
    </nav>
  );
}

function TreeRow({ pad, icon, label, selected }) {
  return (
    <li className={`flex h-[92px] items-center border-l-4 pr-11 ${pad} ${selected ? "border-[#3277b8] bg-[#e1ecf5]" : "border-transparent"}`}>
      {icon}
      <span className="flex-1 pt-1 text-[27px] leading-10 text-[#1c2b33]">{label}</span>
      <button type="button" aria-label={`Options for ${label}`}><Dots className="w-8 text-[#8d949e]" /></button>
    </li>
  );
}

function TreePanel() {
  return (
    <aside className="flex w-[720px] shrink-0 flex-col border-r-2 border-[#c9ced3] bg-white">
      <div className="border-b-2 border-[#e6e8ea] pt-3.5 pr-6 pb-3 pl-[26px]">
        <label className="flex h-[72px] items-center rounded-lg border-2 border-[#ccd3db] px-[22px]">
          <SearchIcon className="mr-4 size-[30px] text-[#1e2b33]" />
          <input type="search" aria-label="Search" placeholder="Search" className="w-full bg-transparent text-[28px] leading-10 outline-none placeholder:text-[#6b757b]" />
        </label>
      </div>
      <ul className="pt-6">
        <TreeRow pad="pl-[25px]" selected label={CAMPAIGN} icon={<FolderIcon className="mr-[18px] w-[30px] text-[#3277b8]" />} />
        <TreeRow pad="pl-14" label={AD_SET} icon={<GridIcon className="mr-4 size-8 text-black" />} />
        <TreeRow pad="pl-[90px]" label={CAMPAIGN} icon={<AdIcon className="mr-[18px] size-7 text-[#1e2b33]" />} />
      </ul>
    </aside>
  );
}

function OutlineButton({ className = "", children, ...rest }) {
  return (
    <button type="button" className={`flex h-[72px] shrink-0 items-center justify-center rounded-lg border-2 border-[#a7b2bd] px-8 text-[27px] leading-10 font-medium text-[#1c2b33] ${className}`} {...rest}>
      {children}
    </button>
  );
}

function PageHeader() {
  return (
    <header className="flex flex-col bg-white px-6 pt-2 pb-4">
      <div className="flex h-[72px] items-center">
        <button type="button" aria-label="Toggle panel" className="mr-6 flex h-[72px] w-20 items-center justify-center rounded-lg border-2 border-[#a7b2bd]">
          <svg viewBox="0 0 30 30" className="size-[30px]" aria-hidden="true">
            <rect x="1.500" y="1.500" width="27" height="27" rx="4" fill="none" stroke="#000" strokeWidth="3" />
            <path d="M3 2h9.500v26H3Z" />
            <path d="M4.500 7h4M4.500 11.500h4M4.500 16h4" stroke="#fff" strokeWidth="1.600" />
          </svg>
        </button>
        <nav aria-label="Breadcrumb" className="flex items-center text-[30px] leading-10 text-[#6b757b]">
          <a href="#campaign" className="flex h-14 items-center rounded-lg bg-[#e1ecf5] px-2.5 font-medium text-[#3277b8]">
            <FolderIcon className="mr-2 w-[29px]" />
            {CAMPAIGN}
          </a>
          <ChevronRight className="mr-8 ml-6 h-[22px] text-[#8d949e]" />
          <a href="#adset" className="flex items-center"><GridIcon className="mr-2 size-8 text-black" />1 Ad set</a>
          <ChevronRight className="mx-8 h-[22px] text-[#8d949e]" />
          <a href="#ad" className="flex items-center"><AdIcon className="mr-2.5 size-7 text-[#1e2b33]" />1 Ad</a>
        </nav>
        <label htmlFor="campaign-state" className="ml-auto text-[28px] leading-10 text-[#6b757b]">Off</label>
        <span className="mx-6 h-11 w-0.5 bg-[#ccd3db]" />
        <input
          id="campaign-state"
          type="checkbox"
          role="switch"
          className="mr-8 h-11 w-[76px] appearance-none rounded-full border-2 border-[#ccd3db] before:mt-1 before:ml-1 before:block before:size-8 before:rounded-full before:bg-[#283943]"
        />
        <button type="button" aria-label="More actions" className="flex h-[72px] w-20 items-center justify-center rounded-lg border-2 border-[#a7b2bd]">
          <Dots className="w-[26px] text-[#1c2b33]" />
        </button>
      </div>
      <div className="flex justify-center gap-4 pt-2 text-[28px] leading-10">
        <button type="button" className="flex h-[72px] items-center gap-4 rounded-lg bg-[#e1ecf5] px-6 font-bold text-[#3277b8]">
          <PencilIcon className="size-[30px]" />Edit
        </button>
        <button type="button" className="flex h-[72px] items-center gap-4 rounded-lg px-6 text-[#1c2b33]">
          <Icon className="w-8" box="0 0 32 22" sw={2.2}>
            <path d="M1.500 11C8-2 24-2 30.500 11 24 24 8 24 1.500 11Z" />
            <circle cx="16" cy="11" r="5.500" />
            <circle cx="16" cy="11" r="1.600" fill="currentColor" />
          </Icon>
          Review
        </button>
      </div>
    </header>
  );
}

function Card({ title, aside, className = "p-8", children }) {
  return (
    <section className={`rounded-lg bg-white shadow-[0_0_40px_rgba(70,110,150,0.08)] ${className}`}>
      <div className="flex h-10 items-center">
        <CheckCircle />
        <h2 className="ml-4 text-[31px] leading-10 font-bold">{title}</h2>
        {aside}
      </div>
      {children}
    </section>
  );
}

function Opportunities() {
  return (
    <aside className="w-[700px] shrink-0 rounded-lg bg-white p-8 text-[27px] leading-10 shadow-[0_0_40px_rgba(70,110,150,0.08)]">
      <div className="flex items-center gap-4">
        <span className="flex size-16 items-center justify-center rounded-2xl bg-[#ebf7f5]">
          <TrendIcon className="w-[30px] text-[#6ab8a6]" />
        </span>
        <h2 className="text-[31px] font-bold">Campaign opportunities</h2>
      </div>
      <div className="mt-4 flex h-10 items-center">
        <SparkleIcon className="mr-1.5 w-6 text-black" />
        <h3 className="text-[28px] font-bold">Advantage+ leads campaign</h3>
        <InfoIcon className="ml-2 size-6" />
        <button type="button" className="ml-auto flex items-center gap-3.5 pr-1.5 font-bold">
          <span className="flex h-9 items-center rounded-2xl bg-[#f0f3f6] px-3 text-[26px]">Off</span>
          <CaretDown className="w-5 text-[#333]" />
        </button>
      </div>
      <p className="mt-4 text-[#6b757b]">You have Advantage+ off for Placements.</p>
      <article className="mt-12 rounded-lg border-2 border-l-8 border-[#eceff2] border-l-[#6db8a6] py-[23px] pr-7 pl-6">
        <div className="flex items-start">
          <TrendIcon className="mt-1 mr-4 w-8 text-[#6ab8a6]" />
          <div className="min-w-0 flex-1">
            <div className="flex items-start justify-between gap-10">
              <h3 className="text-[29px] leading-10 font-bold">Including all placements could improve performance for 1 ad set</h3>
              <button type="button" aria-label="Collapse" className="flex h-10 w-8 shrink-0 items-center justify-center">
                <Icon className="w-5" box="0 0 20 14" sw={3.4}><path d="m2 12 8-9 8 9" /></Icon>
              </button>
            </div>
            <p className="mt-4">
              The more places your ad is displayed, the more chances your target audience has to see it. Including all placements will turn Advantage+ on for Placements for 1 ad set.
            </p>
            <div className="mt-8 flex gap-4">
              <button type="button" className="flex h-[72px] items-center rounded-lg bg-[#3277b8] px-8 font-medium text-white">Apply now</button>
              <OutlineButton>View in ad set</OutlineButton>
            </div>
          </div>
        </div>
      </article>
      <button type="button" className="mt-8 flex items-center gap-2.5 text-[#3277b8]">
        Show more (1)<CaretDown className="w-[15px]" />
      </button>
    </aside>
  );
}

function CampaignForm() {
  return (
    <main className="min-h-0 flex-1 overflow-hidden bg-[radial-gradient(ellipse_30%_60%_at_0%_8%,#f8f1f0_30%,transparent_100%),radial-gradient(ellipse_26%_30%_at_36%_8%,#f1e6ed_0%,transparent_100%),radial-gradient(ellipse_75%_55%_at_100%_105%,#e9f5f1_35%,transparent_100%),radial-gradient(ellipse_22%_60%_at_58%_15%,#e6e2f3_20%,transparent_100%),linear-gradient(90deg,#e3eaf7_0%,#dfe9f6_50%,#e7eff9_80%)] px-8 pt-6 text-[27px] leading-10 text-[#1c2b33]">
      <div className="mx-auto flex max-w-[1932px] items-start gap-8">
        <div className="flex min-w-0 flex-1 flex-col gap-6">
          <Card title="Campaign name">
            <div className="mt-8 flex gap-5">
              <input aria-label="Campaign name" defaultValue={CAMPAIGN} className="h-[72px] min-w-0 flex-1 rounded-lg border-2 border-[#ccd3db] px-[22px] outline-none" />
              <OutlineButton>Create template</OutlineButton>
            </div>
          </Card>
          <Card title="Special Ad Categories" className="px-8 pt-8 pb-12">
            <p className="mt-4">
              Declare if your ads are related to financial products and services, employment, housing, social issues, elections or politics. Requirements differ by country.{" "}
              <a href="#learn" className="text-[#3277b8]">Learn more about Special Ad Categories</a>
            </p>
            <h3 className="mt-8 text-[29px] leading-10 font-bold">Benefits of declaring Special Ad Categories</h3>
            <p className="pr-[100px]">Accurately declaring your ad categories helps you run ads compliant with our advertising standards and helps prevent potential ad rejections.</p>
            <OutlineButton className="mt-10">Categorize your ads</OutlineButton>
            <label htmlFor="categories" className="mt-8 block text-[28px] leading-10 font-bold">Categories</label>
            <p className="text-[24px] leading-8">Select the categories that best describe what this campaign will advertise.</p>
            <div className="relative mt-2">
              <select id="categories" className="h-[72px] w-full appearance-none rounded-lg border-2 border-[#ccd3db] px-[22px] text-[#6b757b] outline-none">
                <option>Declare category if applicable</option>
              </select>
              <CaretDown className="pointer-events-none absolute top-[30px] right-[30px] w-5 text-[#1c2b33]" />
            </div>
          </Card>
          <Card title="Campaign details">
            <h3 className="mt-12 text-[28px] leading-10 font-bold">Buying type</h3>
            <p>Auction</p>
            <h3 className="mt-12 flex items-center gap-4 text-[28px] leading-10 font-bold">Campaign objective<InfoIcon className="size-6" /></h3>
            <p>Leads</p>
            <button type="button" className="mt-4 flex items-center gap-2.5 text-[#3277b8]">Show more options<CaretDown className="w-[15px]" /></button>
          </Card>
          <Card
            title="Budget"
            className="h-60 p-8"
            aside={
              <span className="ml-auto flex h-9 items-center gap-2.5 rounded-2xl bg-[#eef5ea] px-3 text-[24px] font-bold text-[#2c7450]">
                <SparkleIcon className="w-[22px]" />Advantage+ on
              </span>
            }
          />
        </div>
        <Opportunities />
      </div>
    </main>
  );
}

function PublishFooter() {
  return (
    <footer className="border-t-2 border-[#dcdee0] bg-white px-8 py-6 text-[27px] leading-10 text-[#1c2b33]">
      <div className="mx-auto max-w-[1932px]">
        <p>By clicking "Publish," you agree to Facebook's <a href="#terms" className="text-[#385499]">Terms and Advertising Guidelines</a>.</p>
        <div className="mt-4 flex gap-4">
          <OutlineButton className="mr-auto">Close</OutlineButton>
          <OutlineButton className="border-[#ccd3db] text-[#7b868c]" disabled>Discard draft</OutlineButton>
          <button type="button" disabled className="flex h-[72px] items-center rounded-lg bg-[#c9e1cc] px-8 font-medium text-white/90">Publish</button>
        </div>
      </div>
    </footer>
  );
}

function BrowserWindow() {
  return (
    <section className="absolute top-[50px] right-28 bottom-[166px] left-[86px] flex flex-col overflow-hidden rounded-[20px] bg-white shadow-[0_0_0_2px_#000,0_20px_60px_rgba(0,0,0,0.5)]">
      <TabStrip />
      <Toolbar />
      <div className="flex min-h-0 flex-1">
        <Rail />
        <DarkRail />
        <TreePanel />
        <div className="flex min-w-0 flex-1 flex-col">
          <PageHeader />
          <CampaignForm />
          <PublishFooter />
        </div>
      </div>
    </section>
  );
}

export default function App() {
  return (
    <div className="relative h-screen w-full overflow-hidden bg-[radial-gradient(ellipse_28%_3%_at_54%_100%,#dcd8c4_40%,transparent_100%),radial-gradient(ellipse_8%_28%_at_100%_58%,#7a6850_0%,transparent_100%),linear-gradient(180deg,#3c393c_0%,#423d3d_35%,#4b423a_60%,#352e2b_78%,#6a5f4e_79%,#1e1d22_80%,#232226_92%,#34302c_97%,#1f1e22_100%)] font-['Inter','Liberation_Sans',sans-serif]">
      <EditorWindowBehind />
      <NotesWindowBehind />
      <BrowserWindow />
      <Dock />
      <MenuBar />
    </div>
  );
}
